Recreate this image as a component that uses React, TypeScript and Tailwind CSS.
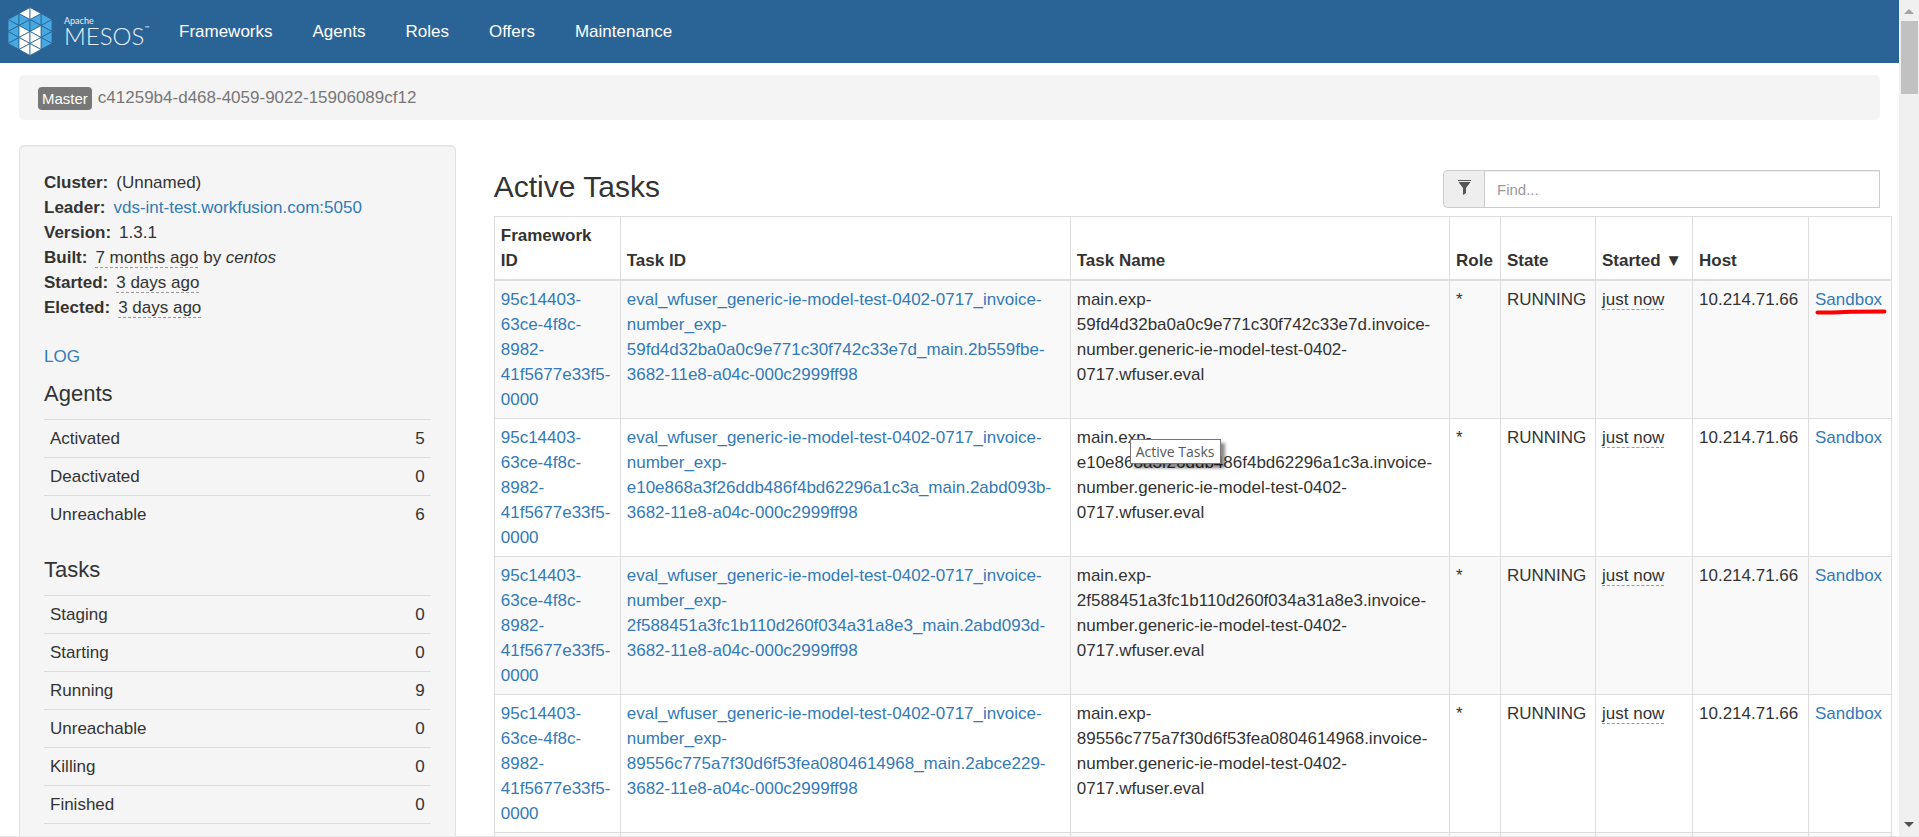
import { useState } from 'react'

const FRAMEWORK_ID = '95c14403-63ce-4f8c-8982-41f5677e33f5-0000'

const navItems = ['Frameworks', 'Agents', 'Roles', 'Offers', 'Maintenance']

const agentStats = [
  { label: 'Activated', value: '5' },
  { label: 'Deactivated', value: '0' },
  { label: 'Unreachable', value: '6' },
]

const taskStats = [
  { label: 'Staging', value: '0' },
  { label: 'Starting', value: '0' },
  { label: 'Running', value: '9' },
  { label: 'Unreachable', value: '0' },
  { label: 'Killing', value: '0' },
  { label: 'Finished', value: '0' },
  { label: 'Killed', value: '7,503' },
]

const tasks = [
  { exp: '59fd4d32ba0a0c9e771c30f742c33e7d', run: '2b559fbe' },
  { exp: 'e10e868a3f26ddb486f4bd62296a1c3a', run: '2abd093b' },
  { exp: '2f588451a3fc1b110d260f034a31a8e3', run: '2abd093d' },
  { exp: '89556c775a7f30d6f53fea0804614968', run: '2abce229' },
  { exp: 'b07c1f3a95d24e6c8f1029d7e3b6a45c', run: '2abce228' },
]

// Left half of the hexagon; the right half is the same set mirrored.
const blueTriangles = [
  '11,6 11,18 0,12',
  '0,12 0,24 11,18',
  '11,18 11,30 0,24',
  '0,24 0,36 11,30',
  '11,30 11,42 0,36',
  '11,6 11,18 22,12',
  '22,12 22,24 11,18',
]
const whiteTriangles = [
  '22,0 22,12 11,6',
  '11,18 11,30 22,24',
  '22,24 22,36 11,30',
  '11,30 11,42 22,36',
  '22,36 22,48 11,42',
]

function HalfHexagon() {
  return (
    <g stroke="#2a6496" strokeWidth="0.8" strokeLinejoin="round">
      {blueTriangles.map((points) => (
        <polygon key={points} points={points} fill="#48a9e0" />
      ))}
      {whiteTriangles.map((points) => (
        <polygon key={points} points={points} fill="#ffffff" />
      ))}
    </g>
  )
}

function Logo() {
  return (
    <a href="#/" className="flex items-center pl-2 text-[#e6eef5]">
      <svg viewBox="0 0 44 48" className="h-[49px] w-11" aria-hidden="true">
        <HalfHexagon />
        <g transform="translate(44 0) scale(-1 1)">
          <HalfHexagon />
        </g>
      </svg>
      <span className="ml-3 flex w-[88px] flex-col font-['Lato',sans-serif]">
        <span className="text-[9px] leading-[9px]">Apache</span>
        <span className="flex items-start">
          <span className="text-[24px] leading-[22px] font-light">MESOS</span>
          <span className="text-[6px] leading-[6px]">™</span>
        </span>
      </span>
    </a>
  )
}

function Ago({ children }: { children: string }) {
  return <span className="border-b border-dashed border-[#999]">{children}</span>
}

function Stats({ title, rows }: { title: string; rows: { label: string; value: string }[] }) {
  return (
    <section className="mb-6">
      <h4 className="mb-[13px] text-[22px] leading-[25px]">{title}</h4>
      <table className="w-full">
        <tbody>
          {rows.map((row) => (
            <tr key={row.label} className="border-t border-[#ddd]">
              <th scope="row" className="px-1.5 py-1.5 text-left font-normal">
                {row.label}
              </th>
              <td className="px-1.5 py-1.5 text-right">{row.value}</td>
            </tr>
          ))}
        </tbody>
      </table>
    </section>
  )
}

function Sidebar() {
  return (
    <aside className="rounded-[5px] border border-[#e3e3e3] bg-[#f5f5f5] px-6 pt-6 shadow-[inset_0_1px_1px_rgba(0,0,0,0.05)]">
      <dl>
        <div className="flex gap-2">
          <dt className="font-bold">Cluster:</dt>
          <dd>(Unnamed)</dd>
        </div>
        <div className="flex gap-2">
          <dt className="font-bold">Leader:</dt>
          <dd>
            <a href="#/leader" className="text-[#337ab7]">
              vds-int-test.workfusion.com:5050
            </a>
          </dd>
        </div>
        <div className="flex gap-2">
          <dt className="font-bold">Version:</dt>
          <dd>1.3.1</dd>
        </div>
        <div className="flex gap-2">
          <dt className="font-bold">Built:</dt>
          <dd>
            <Ago>7 months ago</Ago> by <i>centos</i>
          </dd>
        </div>
        <div className="flex gap-2">
          <dt className="font-bold">Started:</dt>
          <dd>
            <Ago>3 days ago</Ago>
          </dd>
        </div>
        <div className="flex gap-2">
          <dt className="font-bold">Elected:</dt>
          <dd>
            <Ago>3 days ago</Ago>
          </dd>
        </div>
      </dl>
      <p className="mt-6 mb-3">
        <a href="#/log" className="text-[#337ab7]">
          LOG
        </a>
      </p>
      <Stats title="Agents" rows={agentStats} />
      <Stats title="Tasks" rows={taskStats} />
    </aside>
  )
}

function TitleTooltip() {
  return (
    <div
      role="tooltip"
      className="absolute top-5 left-[59px] border border-[#767676] bg-white px-[5px] font-['Open_Sans',sans-serif] text-[14px] leading-[23px] whitespace-nowrap text-[#575757] shadow-[4px_4px_3px_rgba(0,0,0,0.45)]"
    >
      Active Tasks
    </div>
  )
}

function SandboxMark() {
  return (
    <svg
      viewBox="0 0 72 6"
      className="pointer-events-none absolute top-7 left-1.5 h-1.5 w-[72px]"
      aria-hidden="true"
    >
      <path
        d="M2.500 3.600L18 3.600L36 2.700L69.500 2.500"
        fill="none"
        stroke="#ff0000"
        strokeWidth="4"
        strokeLinecap="round"
        strokeLinejoin="round"
      />
    </svg>
  )
}

function ActiveTasks() {
  const [filter, setFilter] = useState('')
  const rows = tasks.filter((t) => `${t.exp} ${t.run}`.includes(filter.trim()))
  const head = 'border border-b-2 border-[#ddd] p-1.5 text-left align-bottom font-bold'
  const cell = 'relative border border-[#ddd] p-1.5 align-top'

  return (
    <section className="pt-[25px]">
      <div className="mb-2 flex items-start justify-between">
        <h3 className="text-[30px] leading-[33px]">Active Tasks</h3>
        <div className="flex h-[38px] w-[437px]">
          <label
            htmlFor="task-filter"
            aria-label="Filter tasks"
            className="flex w-[41px] items-center justify-center rounded-l-[5px] border border-r-0 border-[#ccc] bg-[#eee]"
          >
            <svg viewBox="0 0 13 15" className="mb-1 h-[15px] w-[13px]" aria-hidden="true">
              <path d="M0 0H13V1H0Z M0.500 2H12.500L8 8V13L5 15V8Z" fill="#555" />
            </svg>
          </label>
          <input
            id="task-filter"
            type="text"
            placeholder="Find..."
            value={filter}
            onChange={(e) => setFilter(e.target.value)}
            className="min-w-0 flex-1 border border-[#ccc] bg-white px-3 text-[15px] shadow-[inset_0_1px_1px_rgba(0,0,0,0.075)] outline-none placeholder:text-[#999]"
          />
        </div>
      </div>
      {/* the table runs a little past the column on the right */}
      <div className="-mr-3">
        <table className="w-full table-fixed border-collapse">
          <colgroup>
            <col className="w-[126px]" />
            <col className="w-[450px]" />
            <col />
            <col className="w-[51px]" />
            <col className="w-[95px]" />
            <col className="w-[97px]" />
            <col className="w-[116px]" />
            <col className="w-[83px]" />
          </colgroup>
          <thead>
            <tr>
              <th className={head}>
                Framework
                <br />
                ID
              </th>
              <th className={head}>Task ID</th>
              <th className={head}>Task Name</th>
              <th className={head}>Role</th>
              <th className={head}>State</th>
              <th className={`${head} whitespace-nowrap`}>Started ▼</th>
              <th className={head}>Host</th>
              <th className={head}></th>
            </tr>
          </thead>
          <tbody>
            {rows.map((task, i) => (
              <tr key={task.exp} className="odd:bg-[#f9f9f9]">
                <td className={cell}>
                  <a href="#/frameworks" className="text-[#337ab7]">
                    {FRAMEWORK_ID}
                  </a>
                </td>
                <td className={cell}>
                  <a href="#/tasks" className="text-[#337ab7]">
                    {`eval_wfuser_generic-ie-model-test-0402-0717_invoice-number_exp-${task.exp}_main.${task.run}-3682-11e8-a04c-000c2999ff98`}
                  </a>
                </td>
                <td className={cell}>
                  {`main.exp-${task.exp}.invoice-number.generic-ie-model-test-0402-0717.wfuser.eval`}
                  {i === 1 && <TitleTooltip />}
                </td>
                <td className={cell}>*</td>
                <td className={cell}>RUNNING</td>
                <td className={cell}>
                  <Ago>just now</Ago>
                </td>
                <td className={cell}>10.214.71.66</td>
                <td className={cell}>
                  <a href="#/sandbox" className="text-[#337ab7]">
                    Sandbox
                  </a>
                  {i === 0 && <SandboxMark />}
                </td>
              </tr>
            ))}
          </tbody>
        </table>
      </div>
    </section>
  )
}

function ScrollBar() {
  return (
    <div className="flex w-5 shrink-0 flex-col items-center bg-[#f0f0f0] pt-[9px] pb-[9px]" aria-hidden="true">
      <svg viewBox="0 0 10 5" className="h-[5px] w-[10px]">
        <path d="M5 0L10 5H0Z" fill="#a3a3a3" />
      </svg>
      <div className="mt-[7px] h-[73px] w-[17px] bg-[#c1c1c1]" />
      <svg viewBox="0 0 10 5" className="mt-auto h-[5px] w-[10px]">
        <path d="M0 0H10L5 5Z" fill="#505050" />
      </svg>
    </div>
  )
}

export default function App() {
  return (
    <div className="flex h-screen overflow-hidden border-b border-[#e8e8e8] bg-white font-['Liberation_Sans',Arial,sans-serif] text-[17px] leading-[25px] text-[#333]">
      <div className="min-w-0 flex-1 overflow-hidden">
        <header className="flex h-[63px] items-center bg-[#2a6496]">
          <Logo />
          <nav className="ml-[7px] flex">
            {navItems.map((item) => (
              <a key={item} href={`#/${item.toLowerCase()}`} className="px-5 text-white">
                {item}
              </a>
            ))}
          </nav>
        </header>

        <div className="mx-[19px] mt-3 mb-[25px] flex h-[45px] items-center gap-1.5 rounded-[5px] bg-[#f4f4f4] px-[19px] text-[#777]">
          <span className="mt-0.5 rounded-[4px] bg-[#777] px-1 text-[15px] leading-[23px] text-white">
            Master
          </span>
          <span>c41259b4-d468-4059-9022-15906089cf12</span>
        </div>

        <main className="flex items-start">
          <div className="w-1/4 px-[19px]">
            <Sidebar />
          </div>
          <div className="w-3/4 px-[19px]">
            <ActiveTasks />
          </div>
        </main>
      </div>
      <ScrollBar />
    </div>
  )
}
